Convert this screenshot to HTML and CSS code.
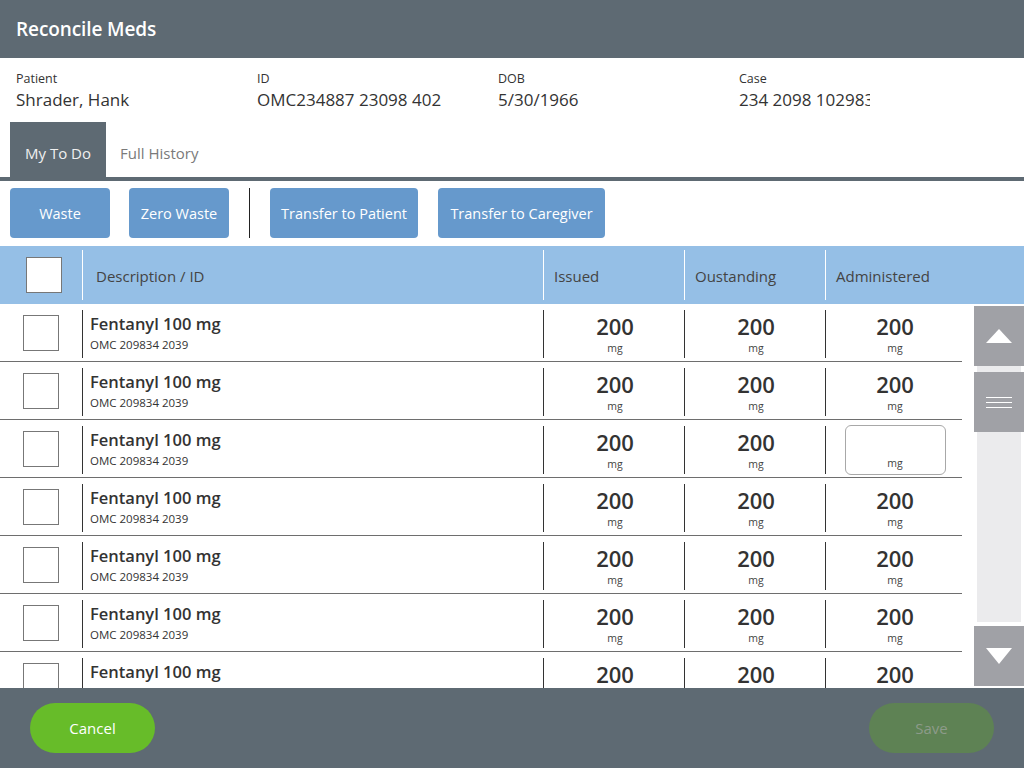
FILE: index.html
```html
<!DOCTYPE html>
<html lang="en">
<head>
<meta charset="utf-8">
<title>Reconcile Meds</title>
<link rel="stylesheet" href="styles.css">
</head>
<body>
<div class="app">
  <header class="title-bar"><h1 class="title">Reconcile Meds</h1></header>

  <section class="patient">
    <div class="field"><div class="label">Patient</div><div class="value">Shrader, Hank</div></div>
    <div class="field"><div class="label">ID</div><div class="value">OMC234887 23098 402</div></div>
    <div class="field"><div class="label">DOB</div><div class="value">5/30/1966</div></div>
    <div class="field field-case"><div class="label">Case</div><div class="value">234 2098 102983</div></div>
  </section>

  <nav class="tabs">
    <div class="tab tab-active">My To Do</div>
    <div class="tab">Full History</div>
  </nav>

  <div class="actions">
    <button class="btn btn-waste">Waste</button>
    <button class="btn btn-zero">Zero Waste</button>
    <span class="divider"></span>
    <button class="btn btn-patient">Transfer to Patient</button>
    <button class="btn btn-caregiver">Transfer to Caregiver</button>
  </div>

  <div class="thead">
    <div class="th th-check"><span class="box box-head"></span></div>
    <div class="th th-sep">Description / ID</div>
    <div class="th th-sep th-num">Issued</div>
    <div class="th th-sep th-num">Oustanding</div>
    <div class="th th-sep th-num">Administered</div>
  </div>

  <div class="tbody-wrap">
    <div class="rows">
      <div class="row">
        <div class="cell cell-check"><span class="box"></span></div>
        <div class="cell cell-sep cell-desc"><div class="name">Fentanyl 100 mg</div><div class="sub">OMC 209834 2039</div></div>
        <div class="cell cell-sep cell-num"><div class="num">200</div><div class="unit">mg</div></div>
        <div class="cell cell-sep cell-num"><div class="num">200</div><div class="unit">mg</div></div>
        <div class="cell cell-sep cell-num"><div class="num">200</div><div class="unit">mg</div></div>
      </div>
      <div class="row">
        <div class="cell cell-check"><span class="box"></span></div>
        <div class="cell cell-sep cell-desc"><div class="name">Fentanyl 100 mg</div><div class="sub">OMC 209834 2039</div></div>
        <div class="cell cell-sep cell-num"><div class="num">200</div><div class="unit">mg</div></div>
        <div class="cell cell-sep cell-num"><div class="num">200</div><div class="unit">mg</div></div>
        <div class="cell cell-sep cell-num"><div class="num">200</div><div class="unit">mg</div></div>
      </div>
      <div class="row">
        <div class="cell cell-check"><span class="box"></span></div>
        <div class="cell cell-sep cell-desc"><div class="name">Fentanyl 100 mg</div><div class="sub">OMC 209834 2039</div></div>
        <div class="cell cell-sep cell-num"><div class="num">200</div><div class="unit">mg</div></div>
        <div class="cell cell-sep cell-num"><div class="num">200</div><div class="unit">mg</div></div>
        <div class="cell cell-sep cell-num"><div class="input-box"><span class="unit">mg</span></div></div>
      </div>
      <div class="row">
        <div class="cell cell-check"><span class="box"></span></div>
        <div class="cell cell-sep cell-desc"><div class="name">Fentanyl 100 mg</div><div class="sub">OMC 209834 2039</div></div>
        <div class="cell cell-sep cell-num"><div class="num">200</div><div class="unit">mg</div></div>
        <div class="cell cell-sep cell-num"><div class="num">200</div><div class="unit">mg</div></div>
        <div class="cell cell-sep cell-num"><div class="num">200</div><div class="unit">mg</div></div>
      </div>
      <div class="row">
        <div class="cell cell-check"><span class="box"></span></div>
        <div class="cell cell-sep cell-desc"><div class="name">Fentanyl 100 mg</div><div class="sub">OMC 209834 2039</div></div>
        <div class="cell cell-sep cell-num"><div class="num">200</div><div class="unit">mg</div></div>
        <div class="cell cell-sep cell-num"><div class="num">200</div><div class="unit">mg</div></div>
        <div class="cell cell-sep cell-num"><div class="num">200</div><div class="unit">mg</div></div>
      </div>
      <div class="row">
        <div class="cell cell-check"><span class="box"></span></div>
        <div class="cell cell-sep cell-desc"><div class="name">Fentanyl 100 mg</div><div class="sub">OMC 209834 2039</div></div>
        <div class="cell cell-sep cell-num"><div class="num">200</div><div class="unit">mg</div></div>
        <div class="cell cell-sep cell-num"><div class="num">200</div><div class="unit">mg</div></div>
        <div class="cell cell-sep cell-num"><div class="num">200</div><div class="unit">mg</div></div>
      </div>
      <div class="row">
        <div class="cell cell-check"><span class="box"></span></div>
        <div class="cell cell-sep cell-desc"><div class="name">Fentanyl 100 mg</div><div class="sub">OMC 209834 2039</div></div>
        <div class="cell cell-sep cell-num"><div class="num">200</div><div class="unit">mg</div></div>
        <div class="cell cell-sep cell-num"><div class="num">200</div><div class="unit">mg</div></div>
        <div class="cell cell-sep cell-num"><div class="num">200</div><div class="unit">mg</div></div>
      </div>
    </div>

    <div class="scrollbar">
      <div class="sb-btn">
        <svg width="26" height="14" viewBox="0 0 26 14"><polygon points="13,0 26,14 0,14" fill="#fff"/></svg>
      </div>
      <div class="sb-track">
        <div class="sb-thumb">
          <svg width="26" height="11" viewBox="0 0 26 11"><g stroke="#fff" stroke-width="1"><line x1="0" y1="0.5" x2="26" y2="0.5"/><line x1="0" y1="5.5" x2="26" y2="5.5"/><line x1="0" y1="10.5" x2="26" y2="10.5"/></g></svg>
        </div>
      </div>
      <div class="sb-btn">
        <svg width="26" height="16" viewBox="0 0 26 16"><polygon points="0,0 26,0 13,16" fill="#fff"/></svg>
      </div>
    </div>
  </div>

  <footer class="footer">
    <button class="pill pill-cancel">Cancel</button>
    <button class="pill pill-save">Save</button>
  </footer>
</div>
</body>
</html>
```

FILE: styles.css
```css
* { box-sizing: border-box; }

html, body {
  margin: 0;
  padding: 0;
  background: #fff;
}

body {
  font-family: "Open Sans", "Noto Sans", "Liberation Sans", sans-serif;
  color: #333;
}

.app {
  width: 1024px;
  height: 768px;
  display: flex;
  flex-direction: column;
  overflow: hidden;
}

/* Title bar */
.title-bar {
  height: 58px;
  flex: none;
  background: #5e6a73;
  display: flex;
  align-items: center;
  padding-left: 16px;
}
.title {
  margin: 0;
  color: #fff;
  font-size: 19px;
  font-weight: 600;
  letter-spacing: -0.1px;
}

/* Patient */
.patient {
  height: 64px;
  flex: none;
  display: grid;
  grid-template-columns: 241px 241px 241px 131px;
  padding: 12px 0 0 16px;
}
.field { overflow: hidden; }
.field-case .value { white-space: nowrap; overflow: hidden; }
.label {
  font-size: 12.5px;
  line-height: 18px;
  color: #333;
}
.value {
  font-size: 17px;
  line-height: 24px;
  color: #333;
  white-space: nowrap;
}

/* Tabs */
.tabs {
  height: 59px;
  flex: none;
  display: flex;
  padding-left: 10px;
  border-bottom: 4px solid #5e6a73;
}
.tab {
  height: 55px;
  display: flex;
  align-items: center;
  padding: 6px 14px 0 14px;
  font-size: 15px;
  color: #7a7a7a;
}
.tab-active {
  width: 96px;
  justify-content: center;
  padding: 6px 0 0 0;
  background: #5e6a73;
  color: #f0f0f0;
}

/* Action buttons */
.actions {
  height: 65px;
  flex: none;
  display: flex;
  align-items: flex-start;
  padding: 7px 0 0 10px;
}
.btn {
  height: 50px;
  border: none;
  border-radius: 4px;
  background: #6699cc;
  color: #fff;
  font-family: inherit;
  font-size: 14.5px;
  padding: 0;
  margin-right: 19px;
}
.btn-waste { width: 100px; }
.btn-zero { width: 100px; margin-right: 20px; }
.btn-patient { width: 148px; margin-right: 20px; }
.btn-caregiver { width: 167px; }
.divider {
  width: 1px;
  height: 50px;
  background: #222;
  margin-right: 20px;
}

/* Table header */
.thead {
  height: 58px;
  flex: none;
  background: #95bfe6;
  display: grid;
  grid-template-columns: 82px 461px 141px 141px 1fr;
}
.th {
  display: flex;
  align-items: center;
  font-size: 15px;
  color: #444;
  padding-top: 4px;
}
.th-check {
  justify-content: flex-start;
  padding: 0 0 0 26px;
}
.th-sep {
  border-left: 1px solid #fff;
  margin: 4px 0;
  padding-left: 13px;
  padding-top: 2px;
}
.th-num { padding-left: 10px; }

.box {
  display: block;
  width: 36px;
  height: 36px;
  border: 1px solid #777;
  background: #fff;
}

/* Table body */
.tbody-wrap {
  flex: 1;
  display: flex;
  overflow: hidden;
}
.rows {
  width: 962px;
  flex: none;
}
.row {
  height: 58px;
  display: grid;
  grid-template-columns: 82px 461px 141px 141px 137px;
  border-bottom: 1px solid #6e6e6e;
}
.cell {
  display: flex;
  flex-direction: column;
  justify-content: center;
  min-height: 0;
}
.cell-check {
  padding-left: 23px;
}
.cell-sep {
  border-left: 1px solid #333;
  margin: 6px 0 3px;
}
.cell-desc {
  padding-left: 7px;
  padding-bottom: 2px;
}
.name {
  font-size: 16.5px;
  font-weight: 600;
  line-height: 22px;
  color: #333;
}
.sub {
  font-size: 11.5px;
  line-height: 16px;
  margin-top: 2px;
  color: #333;
}
.cell-num {
  align-items: center;
  padding-left: 2px;
}
.num {
  font-size: 22px;
  font-weight: 600;
  line-height: 28px;
  color: #333;
}
.unit {
  font-size: 10.5px;
  line-height: 16px;
  color: #444;
}
.input-box {
  width: 101px;
  height: 50px;
  margin: -2px 0 -1px;
  flex: none;
  border: 1px solid #a8a8a8;
  border-radius: 6px;
  display: flex;
  align-items: flex-end;
  justify-content: center;
  padding-bottom: 3px;
}

/* Scrollbar */
.scrollbar {
  width: 50px;
  margin-left: 12px;
  padding: 2px 0 2px;
  display: flex;
  flex-direction: column;
}
.sb-btn {
  height: 60px;
  flex: none;
  background: #a0a1a6;
  display: flex;
  align-items: center;
  justify-content: center;
}
.sb-track {
  flex: 1;
  margin: 0 3px 4px;
  padding-top: 6px;
  background: #ebebed;
}
.sb-thumb {
  height: 60px;
  margin: 0 -3px;
  background: #a0a1a6;
  display: flex;
  align-items: center;
  justify-content: center;
}

/* Footer */
.footer {
  height: 80px;
  flex: none;
  background: #5e6a73;
  display: flex;
  justify-content: space-between;
  align-items: flex-start;
  padding: 15px 30px 0 30px;
}
.pill {
  width: 125px;
  height: 50px;
  border: none;
  border-radius: 25px;
  font-family: inherit;
  font-size: 15px;
  padding: 0;
}
.pill-cancel {
  background: #67bc29;
  color: #fff;
}
.pill-save {
  background: #5e8254;
  color: #8d9b8a;
}
```
